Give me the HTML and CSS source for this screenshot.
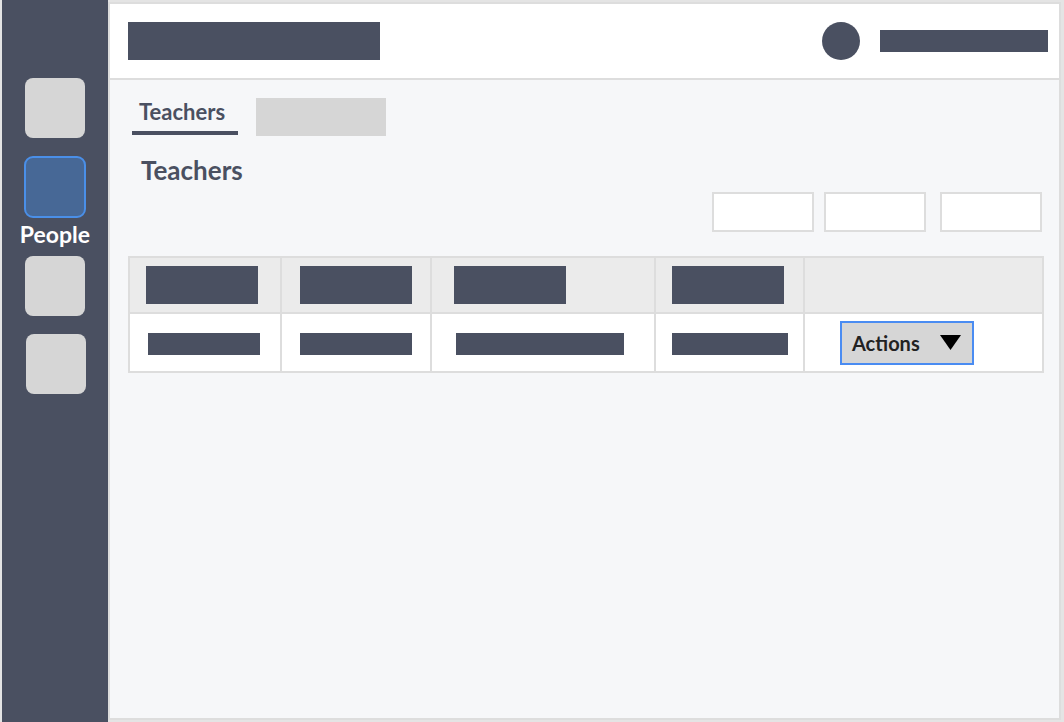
FILE: index.html
```html
<!DOCTYPE html>
<html lang="en">
<head>
    <meta charset="UTF-8">
    <title>Teachers</title>
    <link rel="stylesheet" href="styles.css">
</head>
<body>
    <div class="app">
        <aside class="sidebar">
            <div class="nav-item"><div class="nav-icon"></div></div>
            <div class="nav-item active">
                <div class="nav-icon"></div>
                <span class="nav-label">People</span>
            </div>
            <div class="nav-item"><div class="nav-icon"></div></div>
            <div class="nav-item shifted"><div class="nav-icon"></div></div>
        </aside>

        <main class="main">
            <header class="topbar">
                <div class="block title-block"></div>
                <div class="user">
                    <div class="avatar"></div>
                    <div class="block name-block"></div>
                </div>
            </header>

            <section class="content">
                <nav class="tabs">
                    <div class="tab active">Teachers</div>
                    <div class="tab placeholder"></div>
                </nav>

                <h1 class="page-title">Teachers</h1>

                <div class="filters">
                    <div class="filter"></div>
                    <div class="filter"></div>
                    <div class="filter"></div>
                </div>

                <table class="data-table">
                    <colgroup>
                        <col class="c1">
                        <col class="c2">
                        <col class="c3">
                        <col class="c4">
                        <col class="c5">
                    </colgroup>
                    <thead>
                        <tr>
                            <th><div class="block head-block"></div></th>
                            <th><div class="block head-block"></div></th>
                            <th><div class="block head-block"></div></th>
                            <th><div class="block head-block"></div></th>
                            <th></th>
                        </tr>
                    </thead>
                    <tbody>
                        <tr>
                            <td><div class="block cell-block"></div></td>
                            <td><div class="block cell-block"></div></td>
                            <td><div class="block cell-block wide"></div></td>
                            <td><div class="block cell-block mid"></div></td>
                            <td>
                                <button class="actions" type="button">
                                    <span>Actions</span>
                                    <svg width="21" height="15" viewBox="0 0 21 15"><polygon points="0,0 21,0 10.5,15" fill="#000"/></svg>
                                </button>
                            </td>
                        </tr>
                    </tbody>
                </table>
            </section>
        </main>
    </div>
</body>
</html>
```

FILE: styles.css
```css
body {
    margin: 0;
    background-color: #e4e4e4;
    font-family: Lato, "Open Sans", sans-serif;
}
.app {
    display: flex;
    width: 1064px;
    height: 722px;
    padding-left: 2px;
    box-sizing: border-box;
    overflow: hidden;
}
.block {
    background-color: #4a5061;
}

/* sidebar */
.sidebar {
    width: 106px;
    height: 722px;
    background-color: #4a5061;
    padding-top: 78px;
    box-sizing: border-box;
    display: flex;
    flex-direction: column;
    align-items: center;
    gap: 18px;
}
.nav-item {
    display: flex;
    flex-direction: column;
    align-items: center;
}
.nav-icon {
    width: 60px;
    height: 60px;
    border-radius: 8px;
    background-color: #d6d6d6;
}
.nav-item.active .nav-icon {
    width: 62px;
    height: 62px;
    box-sizing: border-box;
    border: 2px solid #4a8fe8;
    border-radius: 9px;
    background-color: #476896;
}
.nav-item.shifted {
    margin-left: 2px;
}
.nav-label {
    color: #fff;
    font-size: 23px;
    font-weight: bold;
    line-height: 20px;
    margin-top: 6px;
    margin-bottom: -6px;
}

/* main */
.main {
    width: 953px;
    height: 718px;
    margin-top: 2px;
    box-sizing: border-box;
    border: 2px solid #dddddd;
    display: flex;
    flex-direction: column;
    background-color: #f6f7f9;
}
.topbar {
    height: 76px;
    box-sizing: border-box;
    border-bottom: 2px solid #dddddd;
    background-color: #fff;
    padding: 0 11px 0 18px;
    display: flex;
    align-items: center;
    justify-content: space-between;
}
.title-block {
    width: 252px;
    height: 38px;
}
.user {
    display: flex;
    align-items: center;
    gap: 20px;
}
.avatar {
    width: 38px;
    height: 38px;
    border-radius: 50%;
    background-color: #4a5061;
}
.name-block {
    width: 168px;
    height: 22px;
}

.content {
    flex: 1;
    padding: 18px 17px 0 18px;
}
.tabs {
    display: flex;
    align-items: flex-start;
    gap: 18px;
    padding-left: 4px;
}
.tab.active {
    width: 106px;
    box-sizing: border-box;
    padding: 0 0 6px 7px;
    border-bottom: 4px solid #4a5061;
    color: #4a5061;
    font-size: 22px;
    font-weight: bold;
}
.tab.placeholder {
    width: 130px;
    height: 38px;
    background-color: #d6d6d6;
}
.page-title {
    margin: 19px 0 0 13px;
    color: #4a5061;
    font-size: 26px;
    font-weight: bold;
    line-height: 30px;
}
.filters {
    display: flex;
    justify-content: flex-end;
    margin-top: 7px;
}
.filter {
    width: 102px;
    height: 40px;
    box-sizing: border-box;
    border: 2px solid #dddddd;
    background-color: #fff;
}
.filter + .filter {
    margin-left: 10px;
}
.filter:last-child {
    margin-left: 14px;
}

/* table */
.data-table {
    width: 914px;
    margin-top: 24px;
    border-collapse: collapse;
    table-layout: fixed;
    border: 2px solid #dddddd;
}
.c1 { width: 152px; }
.c2 { width: 150px; }
.c3 { width: 224px; }
.c4 { width: 149px; }
.c5 { width: 239px; }
th, td {
    border: 2px solid #dddddd;
    padding: 0 0 0 18px;
    text-align: left;
}
th {
    height: 54px;
    background-color: #ebebeb;
}
td {
    height: 55px;
    padding-top: 2px;
    background-color: #fff;
}
th:nth-child(1), th:nth-child(4), td:nth-child(4) {
    padding-left: 16px;
}
th:nth-child(3) {
    padding-left: 22px;
}
td:nth-child(3) {
    padding-left: 24px;
}
td:nth-child(5) {
    padding-top: 0;
    padding-left: 35px;
}
.head-block {
    width: 112px;
    height: 38px;
}
.cell-block {
    width: 112px;
    height: 22px;
}
.cell-block.wide {
    width: 168px;
}
.cell-block.mid {
    width: 116px;
}
.actions {
    display: flex;
    align-items: center;
    gap: 20px;
    height: 44px;
    padding: 0 11px 0 10px;
    border: 2px solid #4a8cf2;
    background-color: #d6d6d6;
    color: #222;
    font-family: Lato, "Open Sans", sans-serif;
    font-size: 20px;
    font-weight: bold;
    cursor: pointer;
}
```
